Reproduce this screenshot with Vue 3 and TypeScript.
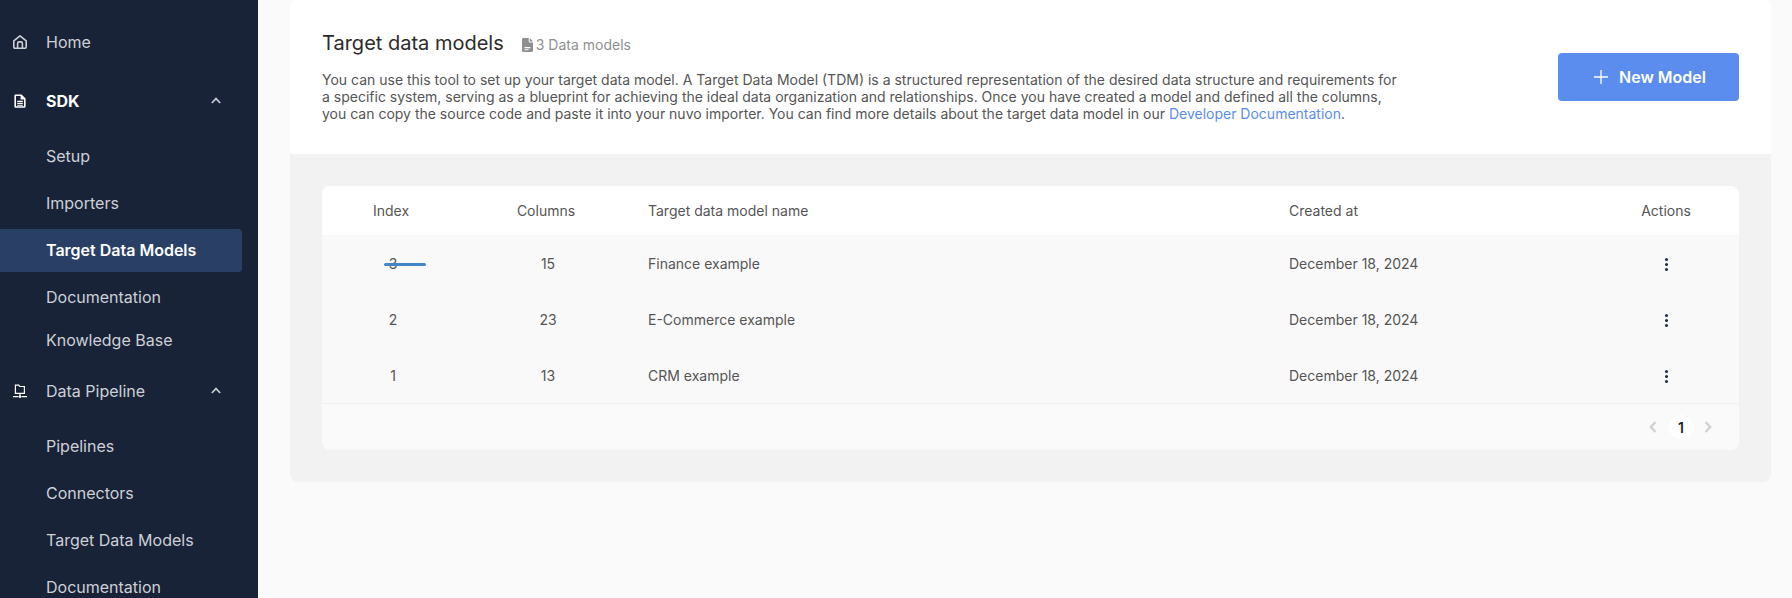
<script setup lang="ts">
interface Row { index: number; columns: number; name: string; created: string }
const rows: Row[] = [
  { index: 3, columns: 15, name: 'Finance example', created: 'December 18, 2024' },
  { index: 2, columns: 23, name: 'E-Commerce example', created: 'December 18, 2024' },
  { index: 1, columns: 13, name: 'CRM example', created: 'December 18, 2024' },
]
</script>

<template>
  <div class="page">
    <aside class="sidebar">
      <a class="top home">
        <svg class="ico" viewBox="0 0 14 14" width="14" height="14" fill="none" stroke="currentColor" stroke-width="1.6" stroke-linejoin="round">
          <path d="M.8 5.800 7 .9l6.200 4.900v6.300c0 .7-.5 1.100-1.100 1.100H1.900c-.6 0-1.100-.4-1.100-1.100z" />
          <path d="M4.600 13V8.400c0-.9.6-1.500 1.400-1.500h2c.8 0 1.400.6 1.400 1.500V13" />
        </svg>
        <span>Home</span>
      </a>
      <a class="top sdk">
        <svg class="ico" viewBox="0 0 14 14" width="14" height="14">
          <path fill="#fff" fill-rule="evenodd" d="M2.800.6h5.800l4 4v7.600c0 1-.7 1.600-1.600 1.600H3c-1 0-1.600-.6-1.600-1.600V2C1.400 1.100 2 .6 2.800.6zm.2 1.500v10.200h8V5.600H7.600V2.100zM4.200 6.800h5.600v1.100H4.200zm0 2h5.600v1.100H4.200zm0 2h5.600v1H4.200z" />
        </svg>
        <span>SDK</span>
        <svg class="chev" viewBox="0 0 10 7" width="10" height="7" fill="none" stroke="currentColor" stroke-width="1.7"><path d="M.8 6 5 1.600 9.200 6" /></svg>
      </a>
      <a class="sub first">Setup</a>
      <a class="sub">Importers</a>
      <a class="sub active">Target Data Models</a>
      <a class="sub">Documentation</a>
      <a class="sub tight">Knowledge Base</a>
      <a class="top pipe">
        <svg class="ico" viewBox="0 0 14 14" width="14" height="14" fill="none" stroke="#fff" stroke-width="1.200">
          <path d="M2.400 1.200h3.400l1 1.300h4.600v6.800H2.400z" />
          <path d="M7 9.300v3M0 12.700h5.500M8.500 12.700H14" />
          <circle cx="7" cy="12.700" r="1.200" fill="#fff" stroke="none" />
        </svg>
        <span>Data Pipeline</span>
        <svg class="chev" viewBox="0 0 10 7" width="10" height="7" fill="none" stroke="currentColor" stroke-width="1.7"><path d="M.8 6 5 1.600 9.200 6" /></svg>
      </a>
      <a class="sub first">Pipelines</a>
      <a class="sub">Connectors</a>
      <a class="sub">Target Data Models</a>
      <a class="sub">Documentation</a>
    </aside>

    <main class="main">
      <section class="card">
        <header class="head">
          <div class="intro">
            <div class="title-row">
              <h1>Target data models</h1>
              <span class="count">
                <svg viewBox="0 0 11 14" width="11" height="14"><path fill="#8f8f8f" fill-rule="evenodd" d="M0 1.500C0 .7.600 0 1.400 0h5.300v3.500c0 .6.400 1 1 1H11v8c0 .8-.6 1.500-1.400 1.500H1.400C.6 14 0 13.300 0 12.500zM7.700 0 11 3.500H7.700zM2.500 9h6v1.200h-6zm0 2.200h4v1.100h-4z" /></svg>
                3 Data models
              </span>
            </div>
            <p>You can use this tool to set up your target data model. A Target Data Model (TDM) is a structured representation of the desired data structure and requirements for a specific system, serving as a blueprint for achieving the ideal data organization and relationships. Once you have created a model and defined all the columns, you can copy the source code and paste it into your nuvo importer. You can find more details about the target data model in our <a class="link">Developer Documentation</a>.</p>
          </div>
          <button class="new" type="button">
            <svg viewBox="0 0 14 14" width="14" height="14" fill="none" stroke="#fff" stroke-width="1.300"><path d="M7 0v14M0 7h14" /></svg>
            New Model
          </button>
        </header>

        <div class="body">
          <div class="table">
            <div class="row thead">
              <div class="c center">Index</div>
              <div class="c center">Columns</div>
              <div class="c pad">Target data model name</div>
              <div class="c pad">Created at</div>
              <div class="c center">Actions</div>
            </div>
            <div v-for="(r, i) in rows" :key="r.index" class="row tr">
              <div class="c center shift">
                {{ r.index }}
                <span v-if="i === 0" class="stroke"></span>
              </div>
              <div class="c center shift">{{ r.columns }}</div>
              <div class="c pad">{{ r.name }}</div>
              <div class="c pad">{{ r.created }}</div>
              <div class="c center">
                <span class="dots"><i></i><i></i><i></i></span>
              </div>
            </div>
            <div class="pager">
              <svg viewBox="0 0 8 12" width="8" height="12" fill="none" stroke="#d0d2d6" stroke-width="2.400"><path d="M6.500 1 1.800 6l4.700 5" /></svg>
              <span class="pg">1</span>
              <svg viewBox="0 0 8 12" width="8" height="12" fill="none" stroke="#d0d2d6" stroke-width="2.400"><path d="M1.500 1l4.700 5-4.700 5" /></svg>
            </div>
          </div>
        </div>
      </section>
    </main>
  </div>
</template>

<style>
html, body { margin: 0; background: #fafafa; }
</style>

<style scoped>
.page {
  display: flex;
  height: 598px;
  overflow: hidden;
  font-family: Inter, "Liberation Sans", sans-serif;
  background: #fafafa;
}
.sidebar {
  width: 258px;
  flex: none;
  background: #182338;
  color: #cdd0d6;
  display: flex;
  flex-direction: column;
  padding-top: 21px;
  padding-right: 16px;
  box-sizing: border-box;
  font-size: 16px;
  overflow: hidden;
}
.top {
  display: flex;
  align-items: center;
  height: 43px;
  flex: none;
  padding-left: 13px;
  padding-bottom: 2px;
  box-sizing: border-box;
  position: relative;
}
.top .ico { margin-right: 19px; flex: none; }
.sdk { margin-top: 16px; color: #fff; font-weight: 700; }
.pipe { margin-top: 8px; }
.chev { position: absolute; left: 211px; top: 17px; color: #c4c8cf; }
.sub {
  display: flex;
  align-items: center;
  height: 43px;
  flex: none;
  padding-left: 46px;
  padding-bottom: 2px;
  box-sizing: border-box;
  margin-top: 4px;
  border-radius: 0 4px 4px 0;
}
.sub.first { margin-top: 12px; }
.sub.tight { margin-top: 0; }
.sub.active { background: #293f66; color: #fff; font-weight: 600; }

.main {
  flex: 1;
  min-width: 0;
  padding: 0 21px 0 32px;
}
.card {
  margin-top: -2px;
  border-radius: 8px;
  overflow: hidden;
  background: #f2f2f2;
}
.head {
  background: #fff;
  display: flex;
  justify-content: space-between;
  align-items: flex-start;
  height: 156px;
  padding: 0 32px;
  box-sizing: border-box;
}
.intro { width: 1080px; padding-top: 31px; }
.title-row { display: flex; align-items: center; height: 28px; gap: 18px; }
h1 { margin: 0; font-size: 20px; font-weight: 400; color: #2b2b2b; line-height: 28px; }
.count { display: flex; align-items: center; gap: 3px; font-size: 14px; color: #8f8f8f; padding-top: 3px; }
p { margin: 14px 0 0; font-size: 14px; line-height: 17px; color: #555; }
.link { color: #5b8def; }
.new {
  margin-top: 55px;
  width: 181px;
  height: 48px;
  border: 0;
  border-radius: 4px;
  background: #5b8def;
  color: #fff;
  font: 600 16px Inter, "Liberation Sans", sans-serif;
  display: flex;
  align-items: center;
  justify-content: center;
  gap: 11px;
  padding-left: 9px;
}
.body { padding: 32px; }
.table { border-radius: 8px; overflow: hidden; background: #f9f9f9; }
.row {
  display: grid;
  grid-template-columns: 138px 172px 641px 320px 146px;
  align-items: center;
  font-size: 14px;
  color: #555;
}
.thead { height: 49px; background: #fff; }
.tr { height: 56px; background: #f9f9f9; }
.c { position: relative; }
.center { text-align: center; }
.shift { padding-left: 4px; }
.pad { padding-left: 16px; }
.stroke {
  position: absolute;
  left: 62px;
  top: 8px;
  width: 42px;
  height: 3px;
  border-radius: 2px;
  background: #4286c6;
}
.dots { display: inline-flex; flex-direction: column; gap: 2px; vertical-align: middle; }
.dots i { display: block; width: 3px; height: 3px; border-radius: 50%; background: #1f2a44; }
.pager {
  height: 47px;
  border-top: 1px solid #f0f0f0;
  box-sizing: border-box;
  background: #fafafa;
  display: flex;
  align-items: center;
  justify-content: flex-end;
  padding-right: 27px;
  gap: 12px;
}
.pg {
  width: 24px;
  height: 24px;
  margin-right: -1px;
  border-radius: 50%;
  background: #fff;
  display: flex;
  align-items: center;
  justify-content: center;
  font-size: 14px;
  font-weight: 600;
  color: #1c1c1c;
}
</style>
